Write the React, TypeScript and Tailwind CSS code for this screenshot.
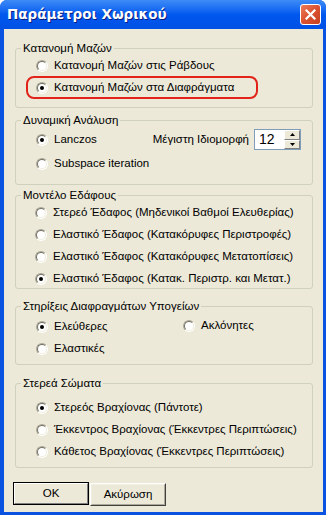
import { ReactNode } from "react";

const font = { fontFamily: '"Liberation Sans", "DejaVu Sans", sans-serif' };

function Radio({ checked }: { checked?: boolean }) {
  return (
    <span className="w-[12px] h-[12px] shrink-0 rounded-full border border-t-[#ACA899] border-l-[#ACA899] border-b-white border-r-white flex">
      <span className="flex-1 rounded-full border border-t-[#716F64] border-l-[#716F64] border-b-[#F1EFE2] border-r-[#F1EFE2] bg-white flex items-center justify-center">
        {checked && <span className="w-[4px] h-[4px] rounded-full bg-black" />}
      </span>
    </span>
  );
}

function Option({ label, checked }: { label: string; checked?: boolean }) {
  return (
    <div className="flex items-center gap-[6px] whitespace-nowrap">
      <Radio checked={checked} />
      <span>{label}</span>
    </div>
  );
}

function Group({ title, className, children }: { title: string; className: string; children: ReactNode }) {
  return (
    <fieldset className={`border border-[#D0D0BF] rounded-[3px] ml-[11px] mr-[10px] ${className}`}>
      <legend className="ml-[5px] px-[2px] leading-[14px]">{title}</legend>
      {children}
    </fieldset>
  );
}

export default function App() {
  return (
    <div
      className="w-[326px] h-[515px] flex flex-col bg-[#0A52E0] rounded-t-[7px] overflow-hidden text-[11.5px] text-black"
      style={font}
    >
      <div className="h-[29px] shrink-0 flex items-center justify-between pl-[7px] pr-[5px] bg-gradient-to-b from-[#3D8BF7] via-[#0058EE] to-[#0050E4]">
        <span
          className="text-white font-bold text-[13.5px] [text-shadow:1px_1px_0_#0A1E80]"
          style={{ fontFamily: '"DejaVu Sans", sans-serif' }}
        >
          Παράμετροι Χωρικού
        </span>
        <button className="w-[21px] h-[21px] rounded-[3px] border border-white bg-gradient-to-br from-[#EB7B58] via-[#DB5130] to-[#C5401F] flex items-center justify-center">
          <svg width="11" height="11" viewBox="0 0 11 11">
            <path d="M1.5 1.5 L9.5 9.5 M9.5 1.5 L1.5 9.5" stroke="white" strokeWidth="2.2" strokeLinecap="square" />
          </svg>
        </button>
      </div>

      <div className="flex-1 ml-[4px] mr-[3px] mb-[3px] bg-[#ECE9D8] pt-[12px] flex flex-col">
        <Group title="Κατανομή Μαζών" className="h-[67px]">
          <div className="pl-[20px] h-[21px] flex items-center">
            <Option label="Κατανομή Μαζών στις Ράβδους" />
          </div>
          <div className="ml-[10px] w-[232px] h-[23px] border-2 border-[#E2231A] rounded-[8px] pl-[8px] flex items-center">
            <Option label="Κατανομή Μαζών στα Διαφράγματα" checked />
          </div>
        </Group>

        <Group title="Δυναμική Ανάλυση" className="h-[72px] mt-[5px]">
          <div className="pl-[20px] pr-[11px] h-[25px] flex items-center justify-between">
            <Option label="Lanczos" checked />
            <div className="flex items-center gap-[5px]">
              <span>Μέγιστη Ιδιομορφή</span>
              <div className="w-[47px] h-[21px] bg-white border border-[#7F9DB9] flex">
                <span className="flex-1 pl-[4px] text-[14px] leading-[19px]">12</span>
                <div className="w-[16px] flex flex-col">
                  {[0, 1].map((i) => (
                    <span
                      key={i}
                      className="flex-1 bg-[#ECE9D8] border border-t-white border-l-white border-b-[#808080] border-r-[#808080] flex items-center justify-center"
                    >
                      <svg width="5" height="3" viewBox="0 0 5 3">
                        <path d={i === 0 ? "M2.5 0 L5 3 L0 3 Z" : "M0 0 L5 0 L2.5 3 Z"} fill="black" />
                      </svg>
                    </span>
                  ))}
                </div>
              </div>
            </div>
          </div>
          <div className="pl-[20px] h-[24px] flex items-center">
            <Option label="Subspace iteration" />
          </div>
        </Group>

        <Group title="Μοντέλο Εδάφους" className="h-[101px] mt-[3px]">
          <div className="pl-[19px] flex flex-col">
            {[
              "Στερεό Έδαφος (Μηδενικοί Βαθμοί Ελευθερίας)",
              "Ελαστικό Έδαφος (Κατακόρυφες Περιστροφές)",
              "Ελαστικό Έδαφος (Κατακόρυφες Μετατοπίσεις)",
              "Ελαστικό Έδαφος (Κατακ. Περιστρ. και  Μετατ.)",
            ].map((t, i) => (
              <div key={t} className="h-[22px] flex items-center">
                <Option label={t} checked={i === 3} />
              </div>
            ))}
          </div>
        </Group>

        <Group title="Στηρίξεις Διαφραγμάτων Υπογείων" className="h-[66px] mt-[10px]">
          <div className="pl-[20px] pt-[3px]">
            <div className="h-[22px] flex items-center">
              <div className="w-[147px]">
                <Option label="Ελεύθερες" checked />
              </div>
              <div className="-mt-[3px]">
                <Option label="Ακλόνητες" />
              </div>
            </div>
            <div className="h-[22px] flex items-center">
              <Option label="Ελαστικές" />
            </div>
          </div>
        </Group>

        <Group title="Στερεά Σώματα" className="h-[92px] mt-[11px]">
          <div className="pl-[20px] pt-[7px]">
            {[
              "Στερεός Βραχίονας (Πάντοτε)",
              "Έκκεντρος Βραχίονας (Έκκεντρες Περιπτώσεις)",
              "Κάθετος Βραχίονας (Έκκεντρες Περιπτώσεις)",
            ].map((t, i) => (
              <div key={t} className="h-[22px] flex items-center">
                <Option label={t} checked={i === 0} />
              </div>
            ))}
          </div>
        </Group>

        <div className="flex gap-[1px] ml-[9px] mt-[14px]">
          <button className="w-[76px] h-[23px] border border-black bg-[#ECE9D8] flex">
            <span className="flex-1 border border-t-white border-l-white border-b-[#808080] border-r-[#808080] flex items-center justify-center">
              OK
            </span>
          </button>
          <button className="w-[76px] h-[23px] mt-[1px] border border-t-white border-l-white border-b-[#404040] border-r-[#404040] bg-[#ECE9D8] flex">
            <span className="flex-1 border border-t-[#F1EFE2] border-l-[#F1EFE2] border-b-[#ACA899] border-r-[#ACA899] flex items-center justify-center">
              Ακύρωση
            </span>
          </button>
        </div>
      </div>
    </div>
  );
}
